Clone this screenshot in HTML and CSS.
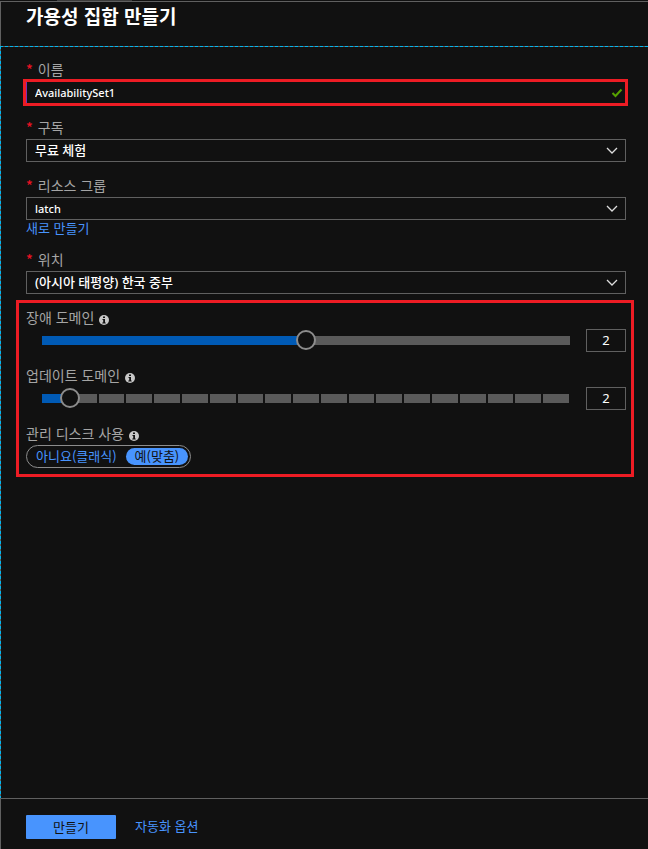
FILE: index.html
```
<!DOCTYPE html>
<html lang="ko">

<head>
    <meta charset="UTF-8">
    <meta name="viewport" content="width=device-width, initial-scale=1.0">
    <title>가용성 집합 만들기</title>
    <link rel="stylesheet" href="styles.css">
</head>

<body>
    <form class="blade">
        <header class="blade-header">
            <h1>가용성 집합 만들기</h1>
        </header>

        <main class="blade-content">
            <div class="field">
                <label class="required" for="name">이름</label>
                <div class="control highlight-input">
                    <input type="text" class="latin" id="name" value="AvailabilitySet1">
                    <svg class="check" viewBox="0 0 12 10" width="12" height="10">
                        <path d="M1.5 5 L4.5 8 L10.5 1.5" />
                    </svg>
                </div>
            </div>

            <div class="field">
                <label class="required" for="subscription">구독</label>
                <div class="control">
                    <select id="subscription">
                        <option>무료 체험</option>
                    </select>
                    <svg class="chevron" viewBox="0 0 12 8" width="12" height="8">
                        <path d="M1 1 L6 6 L11 1" />
                    </svg>
                </div>
            </div>

            <div class="field">
                <label class="required" for="group">리소스 그룹</label>
                <div class="control">
                    <select class="latin" id="group">
                        <option>latch</option>
                    </select>
                    <svg class="chevron" viewBox="0 0 12 8" width="12" height="8">
                        <path d="M1 1 L6 6 L11 1" />
                    </svg>
                </div>
                <a class="link new-group" href="#">새로 만들기</a>
            </div>

            <div class="field">
                <label class="required" for="location">위치</label>
                <div class="control">
                    <select id="location">
                        <option>(아시아 태평양) 한국 중부</option>
                    </select>
                    <svg class="chevron" viewBox="0 0 12 8" width="12" height="8">
                        <path d="M1 1 L6 6 L11 1" />
                    </svg>
                </div>
            </div>

            <div class="highlight-group">
                <div class="field">
                    <label for="fault">장애 도메인
                        <svg class="info" viewBox="0 0 10 10" width="10" height="10">
                            <circle cx="5" cy="5" r="5" />
                            <path d="M4 1.5h2v1.5h-2z M3.5 4h2.5v3.5h.7v1h-3.4v-1h.9v-2.5h-.7z" />
                        </svg>
                    </label>
                    <div class="slider-row">
                        <input type="range" class="slider" id="fault" min="1" max="3" value="2" style="--fill: 50%">
                        <input type="text" class="number" value="2" aria-label="장애 도메인">
                    </div>
                </div>

                <div class="field">
                    <label for="update">업데이트 도메인
                        <svg class="info" viewBox="0 0 10 10" width="10" height="10">
                            <circle cx="5" cy="5" r="5" />
                            <path d="M4 1.5h2v1.5h-2z M3.5 4h2.5v3.5h.7v1h-3.4v-1h.9v-2.5h-.7z" />
                        </svg>
                    </label>
                    <div class="slider-row">
                        <input type="range" class="slider stepped" id="update" min="1" max="20" value="2" style="--fill: 5%">
                        <input type="text" class="number" value="2" aria-label="업데이트 도메인">
                    </div>
                </div>

                <div class="field" role="radiogroup" aria-labelledby="disks">
                    <div class="label" id="disks">관리 디스크 사용
                        <svg class="info" viewBox="0 0 10 10" width="10" height="10">
                            <circle cx="5" cy="5" r="5" />
                            <path d="M4 1.5h2v1.5h-2z M3.5 4h2.5v3.5h.7v1h-3.4v-1h.9v-2.5h-.7z" />
                        </svg>
                    </div>
                    <div class="toggle">
                        <input type="radio" name="managed" id="managed-no">
                        <label for="managed-no">아니요(클래식)</label>
                        <input type="radio" name="managed" id="managed-yes" checked>
                        <label for="managed-yes">예(맞춤)</label>
                    </div>
                </div>
            </div>
        </main>

        <footer class="blade-footer">
            <button type="button" class="btn">만들기</button>
            <a class="link" href="#">자동화 옵션</a>
        </footer>
    </form>
</body>

</html>
```

FILE: styles.css
```
* {
    box-sizing: border-box;
}

body {
    margin: 0;
    background-color: #111;
    color: #fff;
    font-family: "Noto Sans", "Noto Sans CJK KR", sans-serif;
    font-size: 13px;
}

.blade {
    display: flex;
    flex-direction: column;
    min-height: 100vh;
    padding-top: 1px;
    background: linear-gradient(#3c3c3c, #3c3c3c) 57px 0 / 75px 1px no-repeat;
}

.blade-header {
    height: 45px;
    padding: 0 25px;
    border-top: 1px solid #606060;
    border-left: 1px solid #606060;
}

.blade-header h1 {
    margin: 0;
    font-family: "Noto Sans CJK KR", sans-serif;
    font-size: 19px;
    line-height: 28px;
}

/* focus outline: cyan dashes over a grey line */
.blade-content {
    flex: 1;
    padding: 14px 22px 20px 26px;
    background:
        repeating-linear-gradient(to right, #00b7f0 0 3px, #606060 3px 5px) 0 0 / 100% 1px no-repeat,
        repeating-linear-gradient(to bottom, #00b7f0 0 3px, #606060 3px 5px) 0 0 / 1px 100% no-repeat;
}

.field {
    margin-bottom: 14px;
}

.field > label,
.field > .label {
    display: block;
    height: 21px;
    color: #a5a5a5;
    font-family: "Noto Sans CJK KR", sans-serif;
    font-size: 14px;
    line-height: 18px;
    white-space: nowrap;
}

.required::before {
    content: "*";
    margin-right: 5px;
    color: #e81123;
    font-weight: 500;
}

.control {
    display: flex;
    position: relative;
    height: 23px;
}

.control input,
.control select {
    width: 100%;
    height: 100%;
    padding: 0 8px 2px;
    border: 1px solid #606060;
    border-radius: 0;
    outline: none;
    appearance: none;
    background-color: #111;
    color: #fff;
    font-family: "Noto Sans", "Noto Sans CJK KR", sans-serif;
    font-size: 13px;
    font-weight: 500;
}

.control .latin {
    padding-bottom: 0;
    font-size: 11px;
}

.highlight-input {
    height: 27px;
    margin: -2px -2px -2px -3px;
    border: 3px solid #ed1c24;
}

.highlight-input input {
    border: none;
    border-left: 1px solid #7b2fb5;
}

.chevron,
.check {
    position: absolute;
    top: 8px;
    right: 8px;
    fill: none;
    stroke: #ddd;
    stroke-width: 1.3;
    pointer-events: none;
}

.check {
    top: 6px;
    right: 2px;
    stroke: #57a300;
    stroke-width: 2;
}

.link {
    color: #4894fe;
    font-family: "Noto Sans CJK KR", sans-serif;
    line-height: 16px;
    text-decoration: none;
}

.link:hover {
    text-decoration: underline;
}

.new-group {
    display: block;
}

.highlight-group {
    margin: -8px -8px 0 -10px;
    padding: 5px 5px 6px 7px;
    border: 3px solid #ed1c24;
}

.highlight-group .field:last-child {
    margin-bottom: 0;
}

.info {
    margin-left: 1px;
    vertical-align: -2px;
}

.info circle {
    fill: #c8c8c8;
}

.info path {
    fill: #111;
}

.slider-row {
    display: flex;
    gap: 6px;
    height: 23px;
    padding-left: 6px;
}

/* the bar is inset by half a thumb on each side */
.slider {
    --bar: linear-gradient(to right, #005ab5 var(--fill), #5a5a5a var(--fill)) 10px 7px / calc(100% - 20px) 9px no-repeat;
    flex: 1;
    min-width: 0;
    height: 22px;
    margin: 0;
    appearance: none;
    background: var(--bar);
}

.stepped {
    --step: calc(100% / 19);
    background:
        repeating-linear-gradient(to right, transparent 0 calc(var(--step) - 2px), #111 calc(var(--step) - 2px) var(--step)) 11px 7px / calc(100% - 20px) 9px no-repeat,
        var(--bar);
}

.slider::-webkit-slider-thumb {
    width: 20px;
    height: 20px;
    border: 2px solid #8c8c8c;
    border-radius: 50%;
    appearance: none;
    background-color: #111;
}

.number {
    width: 40px;
    padding: 0 0 1px;
    border: 1px solid #606060;
    background-color: #111;
    color: #fff;
    font-family: "Noto Sans", sans-serif;
    font-size: 13px;
    text-align: center;
}

.toggle {
    display: inline-flex;
    align-items: center;
    height: 23px;
    padding-right: 2px;
    border: 1px solid #8c8c8c;
    border-radius: 12px;
    vertical-align: top;
}

.toggle input {
    position: absolute;
    opacity: 0;
    pointer-events: none;
}

.toggle label {
    height: 17px;
    padding: 0 9px;
    border-radius: 9px;
    color: #4894fe;
    font-family: "Noto Sans CJK KR", sans-serif;
    font-size: 13px;
    line-height: 15px;
}

.toggle input:checked + label {
    background-color: #4894fe;
    color: #111;
}

.blade-footer {
    display: flex;
    gap: 19px;
    padding: 16px 25px 10px;
    border-top: 1px solid #606060;
    border-left: 1px solid #606060;
}

.blade-footer .link {
    line-height: 22px;
}

.btn {
    width: 90px;
    height: 24px;
    padding: 0 0 2px;
    border: none;
    border-radius: 1px;
    background-color: #4894fe;
    color: #111;
    font-family: "Noto Sans CJK KR", sans-serif;
    font-size: 13px;
    cursor: pointer;
}
```
